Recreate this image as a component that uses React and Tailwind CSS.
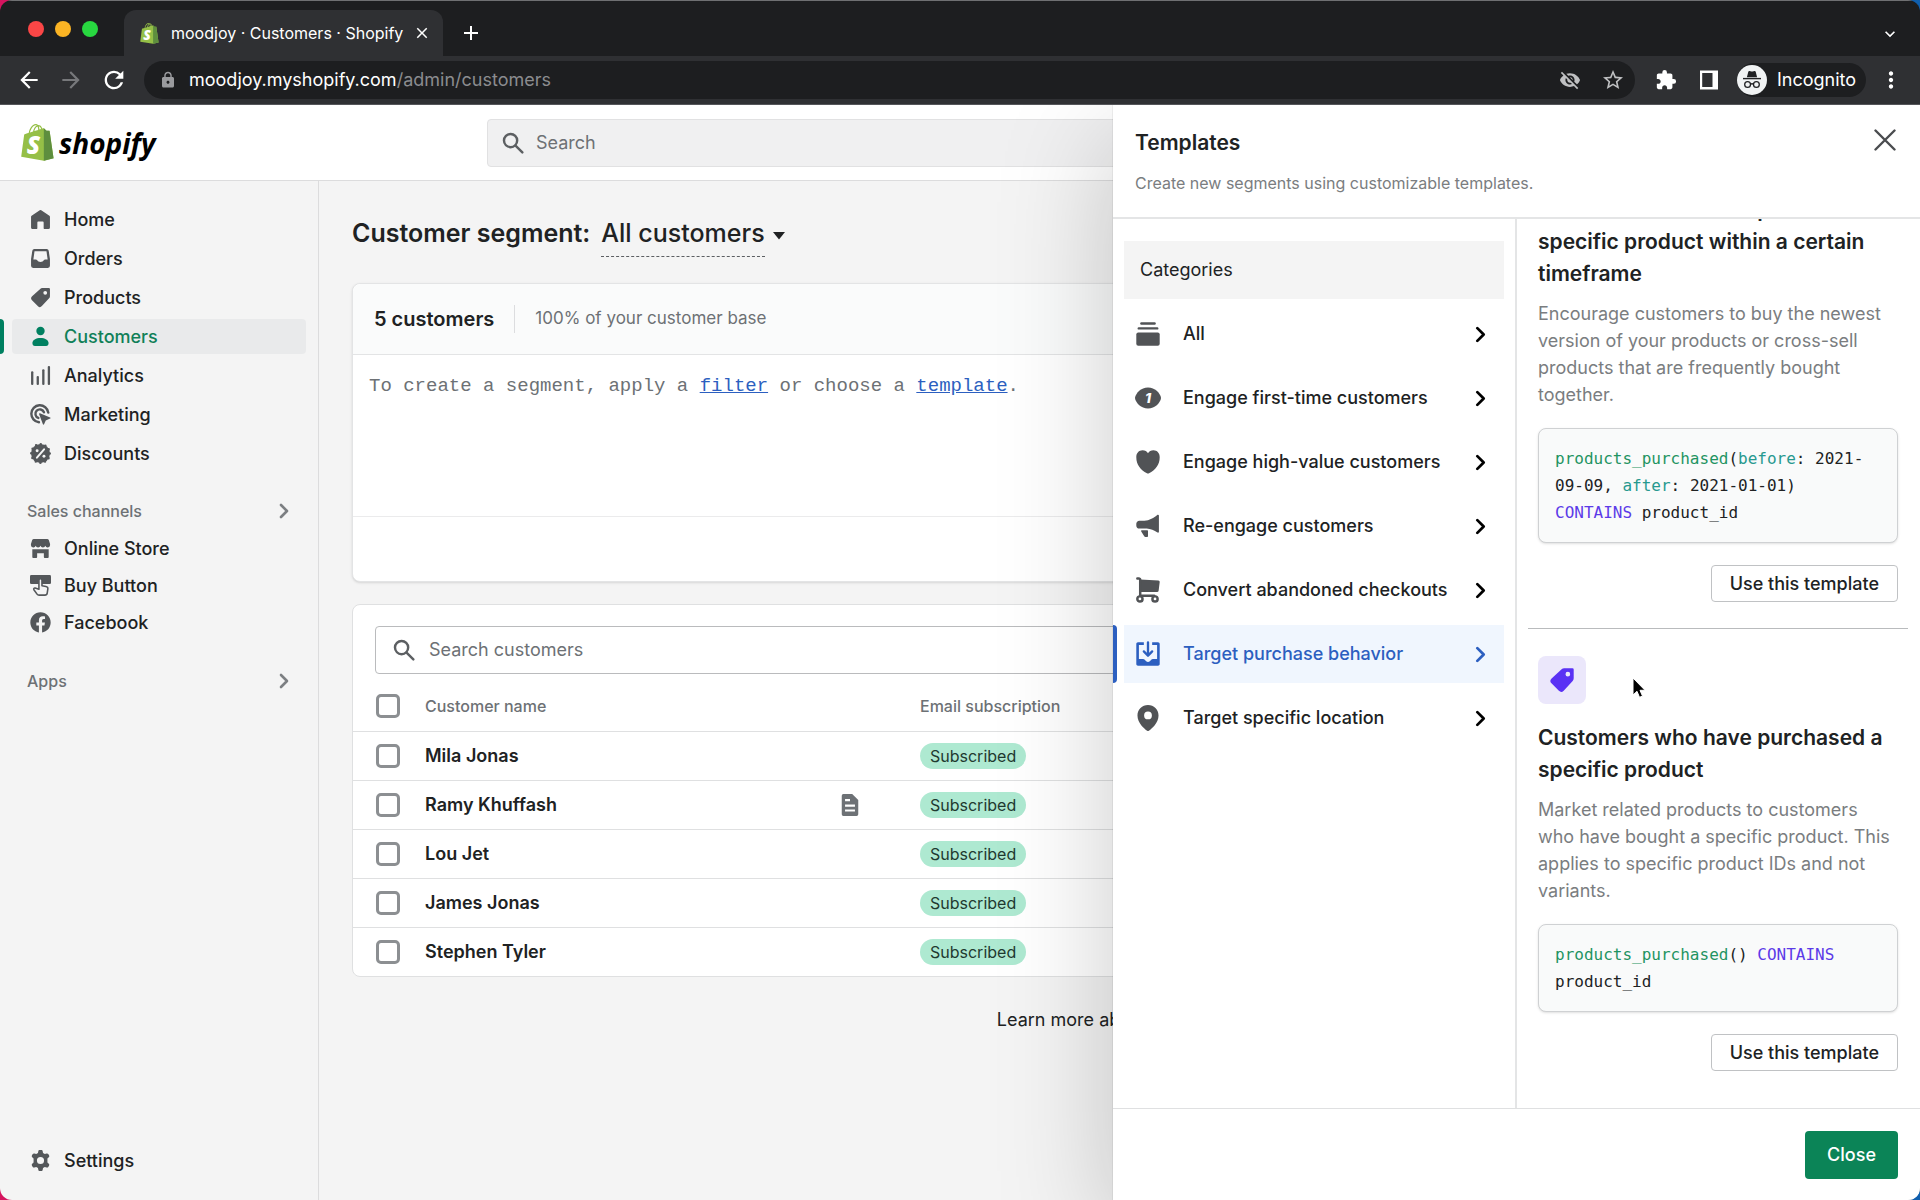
import {
  MdAdd,
  MdArrowBack,
  MdArrowForward,
  MdClose,
  MdExtension,
  MdKeyboardArrowDown,
  MdLock,
  MdMoreVert,
  MdRefresh,
  MdStarBorder,
  MdVisibilityOff,
} from "react-icons/md";
import { FaFacebook } from "react-icons/fa";

const Svg = ({ children, className = "" }) => (
  <svg viewBox="0 0 20 20" fill="currentColor" className={className} aria-hidden="true">
    {children}
  </svg>
);

const HomeIcon = (props) => (
  <Svg {...props}>
    <path d="M10.7 1.2a1.2 1.2 0 0 0-1.4 0L1.5 6.4a1.2 1.2 0 0 0-.5 1v10.1A1.5 1.5 0 0 0 2.5 19h3.9a.6.6 0 0 0 .6-.6v-5.6a.8.8 0 0 1 .8-.8h4.4a.8.8 0 0 1 .8.8v5.6a.6.6 0 0 0 .6.6h3.9a1.5 1.5 0 0 0 1.5-1.5V7.4a1.2 1.2 0 0 0-.5-1z" />
  </Svg>
);

const OrdersIcon = (props) => (
  <Svg {...props}>
    <path
      fillRule="evenodd"
      d="M4.2 1h11.6a2 2 0 0 1 2 1.7L19 10.5V17a2 2 0 0 1-2 2H3a2 2 0 0 1-2-2v-6.500l1.200-7.800a2 2 0 0 1 2-1.700zm.1 2.200L3.200 11h2.600a1 1 0 0 1 .8.400 4 4 0 0 0 6.800 0 1 1 0 0 1 .8-.4h2.600l-1.100-7.800z"
    />
  </Svg>
);

const TagIcon = (props) => (
  <Svg {...props}>
    <path
      fillRule="evenodd"
      d="M18 1h-6.300a3 3 0 0 0-2 .8L2 8.800a2.600 2.600 0 0 0-.1 3.700l5.700 5.800a2.600 2.600 0 0 0 3.700-.1l6.900-7.500a3 3 0 0 0 .8-2V2a1 1 0 0 0-1-1zm-3.500 6.300a1.800 1.800 0 1 1 0-3.600 1.800 1.800 0 0 1 0 3.600z"
    />
  </Svg>
);

const CustomersIcon = (props) => (
  <Svg {...props}>
    <circle cx="10" cy="4.8" r="4" />
    <path d="M2.300 16.200c0-2.900 3.500-4.800 7.700-4.800s7.700 1.900 7.700 4.800c0 1.700-.8 2.800-2.400 2.800H4.700c-1.600 0-2.400-1.100-2.400-2.800z" />
  </Svg>
);

const AnalyticsIcon = (props) => (
  <Svg {...props}>
    <rect x="1" y="6" width="2.2" height="13" rx="1" />
    <rect x="6.3" y="10.5" width="2.2" height="8.5" rx="1" />
    <rect x="11.6" y="4" width="2.2" height="15" rx="1" />
    <rect x="16.9" y="1" width="2.2" height="18" rx="1" />
  </Svg>
);

const MarketingIcon = (props) => (
  <Svg {...props}>
    <g fill="none" stroke="currentColor" strokeWidth="2.3" strokeLinecap="round">
      <path d="M17.400 8.200a8.100 8.100 0 1 0-8.900 9.200" />
      <path d="M13.300 7.900a4.200 4.200 0 1 0-5.400 5.400" />
    </g>
    <path d="M9.500 8.900a.6.6 0 0 0-.8.800l3.600 9.600c.2.500.9.500 1.100 0l1.600-3.600 4.200-1.800c.5-.2.5-.9 0-1.100z" />
  </Svg>
);

const DiscountsIcon = (props) => (
  <Svg {...props}>
    <circle cx="10" cy="10" r="9" />
    <circle cx="10" cy="10" r="8.800" fill="none" stroke="currentColor" strokeWidth="2.4" strokeLinecap="round" strokeDasharray="0 4.608" />
    <path d="M13.400 6l-6.800 8" stroke="#f4f4f4" strokeWidth="1.9" strokeLinecap="round" />
    <circle cx="6.8" cy="7.3" r="1.4" fill="#f4f4f4" />
    <circle cx="13.3" cy="12.7" r="1.4" fill="#f4f4f4" />
  </Svg>
);

const StoreIcon = (props) => (
  <Svg {...props}>
    <path d="M3.600 1h12.800c.7 0 1.200.4 1.500 1l1.200 3.600v1.200a2.300 2.300 0 0 1-4.500.6 2.400 2.400 0 0 1-4.600 0 2.400 2.400 0 0 1-4.600 0 2.300 2.300 0 0 1-4.500-.6V5.600L2.100 2c.3-.6.8-1 1.500-1z" />
    <path d="M2.200 10.600h15.600v7.600a.8.8 0 0 1-.8.800h-3a.8.8 0 0 1-.8-.8V14.500H6.800v3.700a.8.8 0 0 1-.8.8H3a.8.8 0 0 1-.8-.8z" />
  </Svg>
);

const BuyButtonIcon = (props) => (
  <Svg {...props}>
    <rect width="20" height="8.600" rx="1.300" />
    <path
      d="M8.500 5a1.400 1.400 0 0 1 2.900 0v5.300l3.800.6c1.200.2 2 1.200 1.800 2.400l-.6 3.900c-.2 1.300-1 2-2.200 2H8.600c-.8 0-1.400-.3-1.900-1l-3-4.200c-.5-.8.2-1.900 1.200-1.600l3.600 1.200z"
      fill="#f4f4f4"
      stroke="#54575a"
      strokeWidth="1.500"
      strokeLinejoin="round"
    />
  </Svg>
);

const SettingsIcon = (props) => (
  <Svg {...props}>
    <path
      fillRule="evenodd"
      d="M7.900 1.200C8 .5 8.500 0 9.200 0h1.600c.7 0 1.200.5 1.300 1.200l.3 1.700 1.700 1 1.700-.6c.6-.2 1.300 0 1.600.6l.8 1.400c.3.6.2 1.300-.3 1.700L16.600 8v4l1.300 1c.5.4.6 1.100.3 1.700l-.8 1.400c-.3.600-1 .8-1.600.6l-1.700-.6-1.700 1-.3 1.700c-.1.700-.6 1.200-1.300 1.200H9.200c-.7 0-1.200-.5-1.300-1.200l-.3-1.700-1.700-1-1.700.6c-.6.2-1.300 0-1.600-.6l-.8-1.400c-.3-.6-.2-1.300.3-1.700l1.300-1V8L2.100 7c-.5-.4-.6-1.100-.3-1.700l.8-1.400c.3-.6 1-.8 1.600-.6l1.700.6 1.700-1zM10 13.400a3.400 3.400 0 1 0 0-6.800 3.400 3.400 0 0 0 0 6.800z"
    />
  </Svg>
);

const SearchIcon = ({ className }) => (
  <svg viewBox="0 0 20 20" fill="none" stroke="currentColor" strokeWidth="2.2" strokeLinecap="round" className={className} aria-hidden="true">
    <circle cx="7.8" cy="7.8" r="6" />
    <path d="M12.300 12.300l6.200 6.200" />
  </svg>
);

const ChevronIcon = ({ className }) => (
  <svg viewBox="0 0 10 16" fill="none" stroke="currentColor" strokeWidth="2.6" strokeLinecap="round" strokeLinejoin="round" className={className} aria-hidden="true">
    <path d="M2 2l6 6-6 6" />
  </svg>
);

const NoteIcon = (props) => (
  <Svg {...props}>
    <path
      fillRule="evenodd"
      d="M3.500 0H12l5.500 5.500V18.500a1.500 1.500 0 0 1-1.500 1.500H4a1.500 1.500 0 0 1-1.500-1.500V1.500A1.500 1.500 0 0 1 4 0zM5.500 4.500v2H10v-2zm0 5v2h9v-2zm0 4.500v2h9v-2z"
    />
  </Svg>
);

const AllIcon = (props) => (
  <Svg {...props}>
    <rect x="4" y="1" width="12" height="1.8" rx=".9" />
    <rect x="2" y="4.8" width="16" height="1.8" rx=".9" />
    <rect x="1" y="8.8" width="18" height="10.2" rx="1.5" />
  </Svg>
);

const FirstTimeIcon = (props) => (
  <Svg {...props}>
    <path d="M10 2C4.500 2 .9 6.400.1 9.300c-.1.500-.1.900 0 1.400C.9 13.600 4.500 18 10 18s9.100-4.400 9.900-7.300c.1-.5.1-.9 0-1.400C19.100 6.400 15.500 2 10 2z" />
    <text x="10" y="13.8" textAnchor="middle" fill="#fff" fontSize="10.5" fontWeight="800" fontStyle="italic" fontFamily="Inter, sans-serif">1</text>
  </Svg>
);

const HeartIcon = (props) => (
  <Svg {...props}>
    <path d="M5.800 1C3 1 1 3.200 1 6.300c0 5.700 3.300 9.800 8.200 12.400.5.300 1.100.3 1.600 0C15.700 16.100 19 12 19 6.300 19 3.200 17 1 14.200 1 12.300 1 10.800 1.900 10 3.200 9.200 1.900 7.700 1 5.800 1z" />
  </Svg>
);

const MegaphoneIcon = (props) => (
  <Svg {...props}>
    <path d="M17.300 1.400c.5-.3 1.100 0 1.100.6v12.400c0 .6-.6.9-1.100.6-2.500-1.600-5.300-2.700-8.300-3H3.400a2.400 2.400 0 0 1-2.400-2.400V8.300c0-1.300 1-2.400 2.400-2.400H7.200c3.900 0 7.300-2.100 10.100-4.500z" />
    <path d="M5.200 13.300h4.300c.3 0 .5.300.5.500v4c0 .4-.3.600-.6.600H8c-.4 0-.7-.2-.9-.5L4.800 14.200c-.3-.4 0-.9.400-.9z" />
  </Svg>
);

const CartIcon = (props) => (
  <Svg {...props}>
    <path d="M4 1.900l14 .8a1.100 1.100 0 0 1 1 1.200l-.8 6.500a1.300 1.300 0 0 1-1.300 1.200H4z" />
    <g fill="none" stroke="currentColor" strokeWidth="1.9" strokeLinecap="round">
      <path d="M1.800 1.100H3a1 1 0 0 1 1 1v12.300h10.800" />
      <circle cx="3.8" cy="16.900" r="2" />
      <circle cx="15.400" cy="16.900" r="2" />
    </g>
  </Svg>
);

const PurchaseIcon = (props) => (
  <Svg {...props}>
    <path d="M2.300 1h4.500v2H3v10.800h3.300c.4 0 .7.200 1 .5l1.300 1.300c.8.7 2 .7 2.800 0l1.300-1.300c.3-.3.6-.5 1-.5H17V3h-3.800V1h4.500c.7 0 1.300.6 1.300 1.300v15.400c0 .7-.6 1.300-1.300 1.300H2.300C1.600 19 1 18.400 1 17.700V2.300C1 1.600 1.600 1 2.300 1z" />
    <path d="M10 1v10M6.800 8l3.200 3.300L13.200 8" fill="none" stroke="currentColor" strokeWidth="1.800" strokeLinecap="round" strokeLinejoin="round" />
  </Svg>
);

const PinIcon = (props) => (
  <Svg {...props}>
    <path fillRule="evenodd" d="M10 0C5.500 0 1.900 3.500 1.900 8c0 5.800 5.200 10.200 7.500 11.800.4.300.8.300 1.200 0C12.900 18.200 18.100 13.800 18.100 8c0-4.500-3.600-8-8.100-8zm0 11a3 3 0 1 1 0-6 3 3 0 0 1 0 6z" />
  </Svg>
);

const ShopifyBag = ({ className }) => (
  <svg viewBox="0 0 110 125" className={className} aria-hidden="true">
    <path
      fill="#95bf47"
      d="M95.900 23.900c-.1-.6-.6-1-1.100-1l-9.300-.2s-7.400-7.200-8.100-7.900c-.7-.7-2.200-.5-2.700-.3l-3.700 1.100c-.4-1.300-1-2.800-1.800-4.400-2.600-5-6.500-7.700-11.100-7.700l-1 .1-.4-.5c-2-2.200-4.600-3.200-7.700-3.100-6 .2-12 4.500-16.800 12.200-3.400 5.400-6 12.200-6.700 17.500l-11.800 3.700c-3.500 1.100-3.600 1.200-4 4.500-.3 2.500-9.500 73-9.500 73l76.400 13.200 33.100-8.200S96 24.500 95.900 23.900zM67.200 16.800l-5.900 1.800c0-3-.4-7.300-1.800-10.900 4.500.9 6.700 6 7.700 9.100zm-10 3.100l-12.800 3.900c1.200-4.700 3.600-9.400 6.400-12.500 1.100-1.100 2.600-2.400 4.300-3.200 1.800 3.500 2.200 8.400 2.100 11.800zM49.100 4c1.400 0 2.600.3 3.600.9-1.600.8-3.200 2.100-4.700 3.600-3.800 4.100-6.700 10.500-7.900 16.600l-10.500 3.200C31.700 18.800 39.800 4.300 49.100 4z"
    />
    <path fill="#5e8e3e" d="M94.800 22.900l-9.300-.2-8.100-7.900c-.3-.3-.6-.4-1-.5V124l33.100-8.200s-13.500-91.300-13.600-92c-.1-.5-.6-.9-1.100-.9z" />
    <text x="41" y="102" textAnchor="middle" fill="#fff" fontSize="82" fontWeight="800" fontStyle="italic" fontFamily="'Open Sans', sans-serif">S</text>
  </svg>
);

const IncognitoIcon = () => (
  <svg viewBox="0 0 30 30" className="size-[30px]" aria-hidden="true">
    <circle cx="15" cy="15" r="15" fill="#f1f3f4" />
    <path d="M11.300 6.800c.2-.7.700-1 1.300-.8l1.700.5h1.400l1.700-.5c.6-.2 1.100.1 1.300.8l1.400 5.400H9.900z" fill="#202124" />
    <path d="M6 13.600h18" stroke="#202124" strokeWidth="1.4" />
    <g fill="none" stroke="#202124" strokeWidth="1.3">
      <circle cx="10.600" cy="19.5" r="2.9" />
      <circle cx="19.400" cy="19.5" r="2.9" />
      <path d="M13.500 19.200c1-.6 2-.6 3 0" />
    </g>
  </svg>
);

const mainNav = [
  { label: "Home", icon: HomeIcon },
  { label: "Orders", icon: OrdersIcon },
  { label: "Products", icon: TagIcon },
  { label: "Customers", icon: CustomersIcon, active: true },
  { label: "Analytics", icon: AnalyticsIcon },
  { label: "Marketing", icon: MarketingIcon },
  { label: "Discounts", icon: DiscountsIcon },
];

const channelNav = [
  { label: "Online Store", icon: StoreIcon },
  { label: "Buy Button", icon: BuyButtonIcon },
  { label: "Facebook", icon: FaFacebook },
];

const customers = [
  { name: "Mila Jonas" },
  { name: "Ramy Khuffash", hasNote: true },
  { name: "Lou Jet" },
  { name: "James Jonas" },
  { name: "Stephen Tyler" },
];

const categories = [
  { label: "All", icon: AllIcon },
  { label: "Engage first-time customers", icon: FirstTimeIcon },
  { label: "Engage high-value customers", icon: HeartIcon },
  { label: "Re-engage customers", icon: MegaphoneIcon },
  { label: "Convert abandoned checkouts", icon: CartIcon },
  { label: "Target purchase behavior", icon: PurchaseIcon, active: true },
  { label: "Target specific location", icon: PinIcon },
];

const BrowserChrome = () => (
  <header className="shrink-0 bg-[#1d1e20] text-white">
    <div className="flex h-14 items-end border-t border-[#6f7072] pl-7 pr-5">
      <div className="flex gap-[11px] self-start pt-5">
        <span className="size-4 rounded-full bg-[#fb4646]" />
        <span className="size-4 rounded-full bg-[#fbb424]" />
        <span className="size-4 rounded-full bg-[#28d840]" />
      </div>
      <div className="ml-[26px] flex h-[46px] items-center rounded-t-xl bg-[#2f3033] pl-4 pr-3 text-base">
        <ShopifyBag className="mr-3 h-[21px] w-[19px]" />
        <span>moodjoy · Customers · Shopify</span>
        <button aria-label="Close tab" className="ml-[10px]">
          <MdClose className="size-[18px]" />
        </button>
      </div>
      <button aria-label="New tab" className="mb-[11px] ml-4">
        <MdAdd className="size-6" />
      </button>
      <button aria-label="Search tabs" className="mb-3 ml-auto">
        <MdKeyboardArrowDown className="size-5" />
      </button>
    </div>
    <div className="flex h-[49px] items-center border-b border-[#55565a] bg-[#2f3033] px-4">
      <button aria-label="Back">
        <MdArrowBack className="size-[26px]" />
      </button>
      <button aria-label="Forward" className="ml-4 text-[#77787b]">
        <MdArrowForward className="size-[26px]" />
      </button>
      <button aria-label="Reload" className="ml-4">
        <MdRefresh className="size-[28px]" />
      </button>
      <div className="ml-4 flex h-[38px] min-w-0 flex-1 items-center rounded-full bg-[#1d1e20] pl-[15px] pr-[10px] text-lg">
        <MdLock className="mr-3 size-[18px] text-[#9a9b9e]" />
        <span>moodjoy.myshopify.com</span>
        <span className="text-[#8b8c8f]">/admin/customers</span>
        <MdVisibilityOff className="ml-auto size-[22px] text-[#bfc0c2]" />
        <button aria-label="Bookmark" className="ml-5 text-[#bfc0c2]">
          <MdStarBorder className="size-6" />
        </button>
      </div>
      <button aria-label="Extensions" className="ml-5">
        <MdExtension className="size-[22px]" />
      </button>
      <button aria-label="Side panel" className="ml-[22px]">
        <svg viewBox="0 0 20 20" className="size-5" aria-hidden="true">
          <path fill="#fff" fillRule="evenodd" d="M1 .5h18v19H1zM3.200 3v14h10.300V3z" />
        </svg>
      </button>
      <div className="ml-[18px] flex h-[34px] items-center gap-[10px] rounded-full bg-[#1d1e20] pr-[10px] text-lg">
        <IncognitoIcon />
        Incognito
      </div>
      <button aria-label="Menu" className="ml-3">
        <MdMoreVert className="size-[26px]" />
      </button>
    </div>
  </header>
);

const TopBar = () => (
  <div className="flex h-[76px] shrink-0 items-center border-b border-[#dcdcdd] bg-white pl-[21px]">
    <a href="#home" className="flex w-[466px] shrink-0 items-center gap-[5px]">
      <ShopifyBag className="h-[37px] w-[33px]" />
      <span className="font-['Open_Sans',sans-serif] text-[28px] font-bold italic leading-9 text-black">shopify</span>
    </a>
    <div className="flex h-12 min-w-0 flex-1 items-center rounded border border-[#e1e1e2] bg-[#f0f0f1] px-[14px] text-[#5c5f62]">
      <SearchIcon className="mr-3 size-[22px] shrink-0" />
      <input type="search" aria-label="Search" placeholder="Search" className="min-w-0 flex-1 bg-transparent text-lg outline-none placeholder:text-[#6d7175]" />
    </div>
  </div>
);

const NavItem = ({ label, icon: Icon, active }) => (
  <li className="relative px-3">
    {active && <span className="absolute inset-y-0 left-0 w-1 rounded-r bg-[#008060]" />}
    <a
      href="#nav"
      className={`flex h-[35px] items-center gap-[13px] rounded px-[18px] ${active ? "bg-[#e9eaeb] text-[#108058]" : ""}`}
    >
      <Icon className={`size-[21px] shrink-0 ${active ? "text-[#008060]" : "text-[#54575a]"}`} />
      {label}
    </a>
  </li>
);

const NavHeading = ({ children }) => (
  <button className="flex w-full items-center justify-between pl-[27px] pr-[29px] text-base font-medium text-[#6d7175]">
    {children}
    <ChevronIcon className="h-4 w-[10px] text-[#7c7f82]" />
  </button>
);

const Sidebar = () => (
  <nav className="flex w-[319px] shrink-0 flex-col border-r border-[#dcdcdd] pb-[22px] pt-[21px] text-lg font-medium">
    <ul className="flex flex-col gap-1">
      {mainNav.map((item) => (
        <NavItem key={item.label} {...item} />
      ))}
    </ul>
    <div className="mt-7">
      <NavHeading>Sales channels</NavHeading>
      <ul className="mt-2 flex flex-col gap-[2px]">
        {channelNav.map((item) => (
          <NavItem key={item.label} {...item} />
        ))}
      </ul>
    </div>
    <div className="mt-[29px]">
      <NavHeading>Apps</NavHeading>
    </div>
    <ul className="mt-auto">
      <NavItem label="Settings" icon={SettingsIcon} />
    </ul>
  </nav>
);

const Checkbox = ({ label }) => (
  <input
    type="checkbox"
    aria-label={label}
    className="block size-6 appearance-none rounded-[5px] border-[3px] border-[#8c8f92] bg-white"
  />
);

const SegmentCard = () => (
  <section className="rounded-lg border border-[#e3e4e5] bg-white shadow-sm">
    <div className="flex h-[71px] items-center rounded-t-lg border-b border-[#e3e4e5] bg-[#fafbfb] px-[21px]">
      <h2 className="text-xl font-semibold">5 customers</h2>
      <span className="mx-5 h-7 w-px bg-[#dcdddf]" />
      <p className="text-[17px] text-[#6d7175]">100% of your customer base</p>
    </div>
    <p className="h-[162px] border-b border-[#ebebec] px-4 pt-[17px] font-['Liberation_Mono',monospace] text-[19px] leading-7 text-[#6d7175]">
      To create a segment, apply a{" "}
      <a href="#filter" className="text-[#2c5fc0] underline">filter</a> or choose a{" "}
      <a href="#template" className="text-[#2c5fc0] underline">template</a>.
    </p>
    <div className="h-16" />
  </section>
);

const CustomerTable = () => (
  <section className="mt-[22px] rounded-lg border border-[#dfe0e1] bg-white">
    <div className="px-[22px] pt-[21px]">
      <div className="flex h-12 items-center rounded border border-[#babbbd] px-[17px] text-[#5c5f62]">
        <SearchIcon className="mr-[14px] size-[22px] shrink-0" />
        <input type="search" aria-label="Search customers" placeholder="Search customers" className="min-w-0 flex-1 bg-transparent text-lg outline-none placeholder:text-[#6d7175]" />
      </div>
    </div>
    <table className="mt-2 w-full table-fixed text-left">
      <colgroup>
        <col className="w-[72px]" />
        <col className="w-[414px]" />
        <col className="w-[81px]" />
        <col />
      </colgroup>
      <thead className="text-base text-[#6d7175]">
        <tr className="h-[49px]">
          <th className="pl-[23px]"><Checkbox label="Select all customers" /></th>
          <th className="font-medium" colSpan={2}>Customer name</th>
          <th className="font-medium">Email subscription</th>
        </tr>
      </thead>
      <tbody>
        {customers.map((customer) => (
          <tr key={customer.name} className="h-[49px] border-t border-[#dfe0e1]">
            <td className="pl-[23px]"><Checkbox label={`Select ${customer.name}`} /></td>
            <td className="text-lg font-semibold">{customer.name}</td>
            <td>{customer.hasNote && <NoteIcon className="size-[22px] text-[#6d7175]" />}</td>
            <td>
              <span className="inline-block rounded-full bg-[#aee9d1] px-[10px] text-base leading-[26px] text-[#1f3a30]">Subscribed</span>
            </td>
          </tr>
        ))}
      </tbody>
    </table>
  </section>
);

const keyword = "text-[#5c3be8]";
const fnName = "text-[#1f9462]";
const argName = "text-[#27998f]";

const Template = ({ title, description, code }) => (
  <article className="shrink-0 px-[10px] pt-[27px]">
    <span className="flex size-12 items-center justify-center rounded-lg bg-[#ebe7fb]">
      <TagIcon className="size-[26px] text-[#5a31f4]" />
    </span>
    <h3 className="mt-[18px] text-[21px] font-semibold leading-8">{title}</h3>
    <p className="mt-[10px] text-lg leading-[27px] text-[#7a7d80]">{description}</p>
    <pre className="mt-5 whitespace-pre-wrap rounded-lg border border-[#cfd1d3] bg-[#f9fafa] p-4 font-['DejaVu_Sans_Mono',monospace] text-base leading-[27px] shadow-sm">
      {code}
    </pre>
    <div className="mt-[22px] flex justify-end">
      <button className="rounded border border-[#c0c2c4] bg-white px-[18px] text-lg font-medium leading-[35px]">Use this template</button>
    </div>
  </article>
);

const TemplatesDrawer = () => (
  <aside className="absolute inset-y-0 right-0 flex w-[807px] flex-col bg-white shadow-[0_34px_107px_rgba(0,0,0,0.21),0_0_1px_rgba(0,0,0,0.3)]">
    <header className="flex h-[114px] shrink-0 justify-between border-b-2 border-[#e4e5e6] pl-[22px] pr-6 pt-6">
      <div>
        <h2 className="text-[21px] font-semibold leading-7">Templates</h2>
        <p className="mt-[14px] text-base leading-6 text-[#7a7d80]">Create new segments using customizable templates.</p>
      </div>
      <button aria-label="Close templates" className="size-[22px] text-[#4a4c4f]">
        <svg viewBox="0 0 22 22" fill="none" stroke="currentColor" strokeWidth="2.4" strokeLinecap="round" aria-hidden="true">
          <path d="M1.500 1.500l19 19M20.500 1.500l-19 19" />
        </svg>
      </button>
    </header>
    <div className="flex min-h-0 flex-1">
      <div className="w-[404px] shrink-0 border-r-2 border-[#e4e5e6] pt-[22px]">
        <h3 className="mx-[11px] bg-[#f4f4f4] px-4 text-lg leading-[58px]">Categories</h3>
        <ul className="mt-[6px] flex flex-col gap-[6px] text-lg font-medium">
          {categories.map(({ label, icon: Icon, active }) => (
            <li key={label} className="relative px-[11px]">
              {active && <span className="absolute inset-y-0 left-0 w-1 rounded-r bg-[#2c5fc0]" />}
              <button
                className={`flex h-[58px] w-full items-center pl-[11px] pr-[18px] ${active ? "bg-[#f0f6fe] text-[#2c5fc0]" : ""}`}
              >
                <Icon className={`size-[26px] shrink-0 ${active ? "" : "text-[#515356]"}`} />
                <span className="ml-[22px] flex-1 text-left">{label}</span>
                <ChevronIcon className={`h-[17px] w-[11px] ${active ? "" : "text-black"}`} />
              </button>
            </li>
          ))}
        </ul>
      </div>
      <div className="relative flex min-w-0 flex-1 flex-col justify-end overflow-hidden pb-[37px] pl-[11px] pr-3">
        <Template
          title="Customers who have purchased a specific product within a certain timeframe"
          description="Encourage customers to buy the newest version of your products or cross-sell products that are frequently bought together."
          code={
            <>
              <span className={fnName}>products_purchased</span>(<span className={argName}>before</span>: 2021-09-09,{" "}
              <span className={argName}>after</span>: 2021-01-01) <span className={keyword}>CONTAINS</span> product_id
            </>
          }
        />
        <hr className="mt-[26px] shrink-0 border-[#b9bbbd]" />
        <Template
          title="Customers who have purchased a specific product"
          description="Market related products to customers who have bought a specific product. This applies to specific product IDs and not variants."
          code={
            <>
              <span className={fnName}>products_purchased</span>() <span className={keyword}>CONTAINS</span> product_id
            </>
          }
        />
        <svg viewBox="0 0 14 22" className="absolute left-[115px] top-[458px] h-[22px] w-[14px]" aria-hidden="true">
          <path d="M1 1v17l4-3.700 2.500 6 3-1.200L8 13.300h5z" fill="#000" stroke="#fff" strokeWidth="1" />
        </svg>
      </div>
    </div>
    <footer className="flex h-[92px] shrink-0 items-center justify-end border-t border-[#dfe0e1] px-[22px]">
      <button className="h-12 rounded bg-[#0b8457] px-[22px] text-lg font-medium text-white">Close</button>
    </footer>
  </aside>
);

const App = () => {
  return (
    <div className="h-screen bg-linear-to-r from-[#d6145f] via-[#17182e] to-[#0f5fae]">
      <div className="flex h-full flex-col overflow-hidden rounded-xl font-['Inter',sans-serif] text-[#202223]">
        <BrowserChrome />
        <div className="relative flex min-h-0 flex-1 flex-col overflow-hidden bg-[#f4f4f4]">
          <TopBar />
          <div className="flex min-h-0 flex-1">
            <Sidebar />
            <main className="min-w-0 flex-1 px-[33px] pt-[34px]">
              <h1 className="flex items-start gap-[11px] text-[25px] font-semibold leading-9">
                Customer segment:
                <button className="flex items-center gap-2 font-medium">
                  <span className="border-b border-dashed border-[#5c5f62] pb-[5px]">All customers</span>
                  <svg viewBox="0 0 12 8" className="h-2 w-3" fill="currentColor" aria-hidden="true">
                    <path d="M0 0h12L6 7.500z" />
                  </svg>
                </button>
              </h1>
              <div className="mt-[26px]">
                <SegmentCard />
                <CustomerTable />
              </div>
              <p className="mt-[29px] text-center text-lg">
                Learn more about <a href="#help" className="text-[#2c6ecb]">customers</a>
              </p>
            </main>
          </div>
          <TemplatesDrawer />
        </div>
      </div>
    </div>
  );
};

export default App;
